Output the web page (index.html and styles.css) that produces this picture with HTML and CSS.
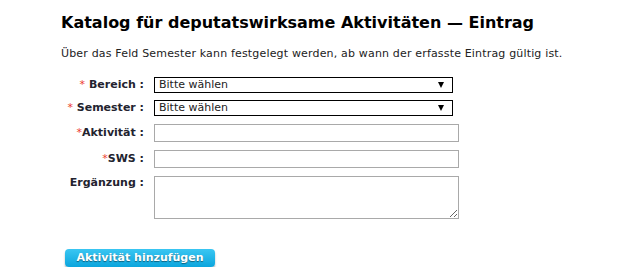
FILE: index.html
```html
<!DOCTYPE html>
<html lang="de">
<head>
<meta charset="utf-8">
<title>Katalog Eintrag</title>
<link rel="stylesheet" href="styles.css">
</head>
<body>
<div class="page">
  <h1 class="title">Katalog für deputatswirksame Aktivitäten — Eintrag</h1>
  <p class="intro">Über das Feld Semester kann festgelegt werden, ab wann der erfasste Eintrag gültig ist.</p>
  <form class="form">
    <label class="label"><span class="req">*</span> Bereich :</label>
    <div class="field"><div class="select-wrap"><select class="select"><option>Bitte wählen</option></select></div></div>

    <label class="label"><span class="req">*</span> Semester :</label>
    <div class="field"><div class="select-wrap"><select class="select"><option>Bitte wählen</option></select></div></div>

    <label class="label"><span class="req">*</span>Aktivität :</label>
    <div class="field"><input class="input" type="text"></div>

    <label class="label"><span class="req">*</span>SWS :</label>
    <div class="field"><input class="input" type="text"></div>

    <label class="label label-top">Ergänzung :</label>
    <div class="field"><textarea class="textarea"></textarea></div>
  </form>
  <div class="actions"><button class="btn" type="button">Aktivität hinzufügen</button></div>
</div>
</body>
</html>
```
FILE: styles.css
```css
html, body {
  margin: 0;
  padding: 0;
  background: #fff;
}
.page {
  padding: 13px 0 0 61px;
  font-family: "DejaVu Sans", Verdana, sans-serif;
  color: #1a1a1a;
}
.title {
  margin: 0;
  font-size: 16px;
  line-height: 20px;
  font-weight: bold;
  color: #000;
}
.intro {
  margin: 14px 0 0 0;
  font-size: 11px;
  line-height: 14px;
  letter-spacing: 0.17px;
  color: #222;
}
.form {
  margin-top: 16px;
  display: grid;
  grid-template-columns: 83px 305px;
  column-gap: 10px;
  row-gap: 7px;
  align-items: center;
}
.label {
  text-align: right;
  font-size: 11px;
  font-weight: bold;
  color: #23232f;
  line-height: 14px;
}
.label-top {
  align-self: start;
  padding-top: 1px;
}
.req {
  color: #ec3b2e;
  font-weight: normal;
}
.field {
  display: flex;
}
.select-wrap {
  position: relative;
  width: 299px;
}
.select-wrap::after {
  content: "";
  position: absolute;
  right: 9px;
  top: 5px;
  border-left: 3px solid transparent;
  border-right: 3px solid transparent;
  border-top: 6px solid #000;
  pointer-events: none;
}
.select {
  -webkit-appearance: none;
  appearance: none;
  display: block;
  width: 299px;
  height: 16px;
  margin: 0;
  padding: 0 4px;
  border: 1px solid #000;
  border-radius: 0;
  background: #fff;
  font-family: "DejaVu Sans", Verdana, sans-serif;
  font-size: 11px;
  line-height: 14px;
  color: #222;
  box-sizing: border-box;
}
.input {
  display: block;
  width: 305px;
  height: 18px;
  margin: 1px 0 0 0;
  padding: 0 3px;
  border: 1px solid #a9a9a9;
  border-radius: 0;
  background: #fff;
  box-sizing: border-box;
  font-family: "DejaVu Sans", Verdana, sans-serif;
  font-size: 11px;
}
.textarea {
  display: block;
  width: 305px;
  height: 43px;
  margin: 1px 0 0 0;
  padding: 2px;
  border: 1px solid #a9a9a9;
  border-radius: 0;
  box-sizing: border-box;
  font-family: "DejaVu Sans", Verdana, sans-serif;
  font-size: 11px;
}
.actions {
  margin-top: 30px;
  padding-left: 4px;
}
.btn {
  display: block;
  width: 150px;
  height: 18px;
  padding: 0;
  border: 0;
  border-radius: 4px;
  background: linear-gradient(#3ac6f2, #0ba5dd);
  box-shadow: 0 2px 2px rgba(0, 0, 0, 0.3);
  color: #fff;
  font-family: "DejaVu Sans", Verdana, sans-serif;
  font-size: 11px;
  font-weight: bold;
  line-height: 18px;
  text-shadow: 0 1px 1px rgba(0, 0, 0, 0.45);
}
```
